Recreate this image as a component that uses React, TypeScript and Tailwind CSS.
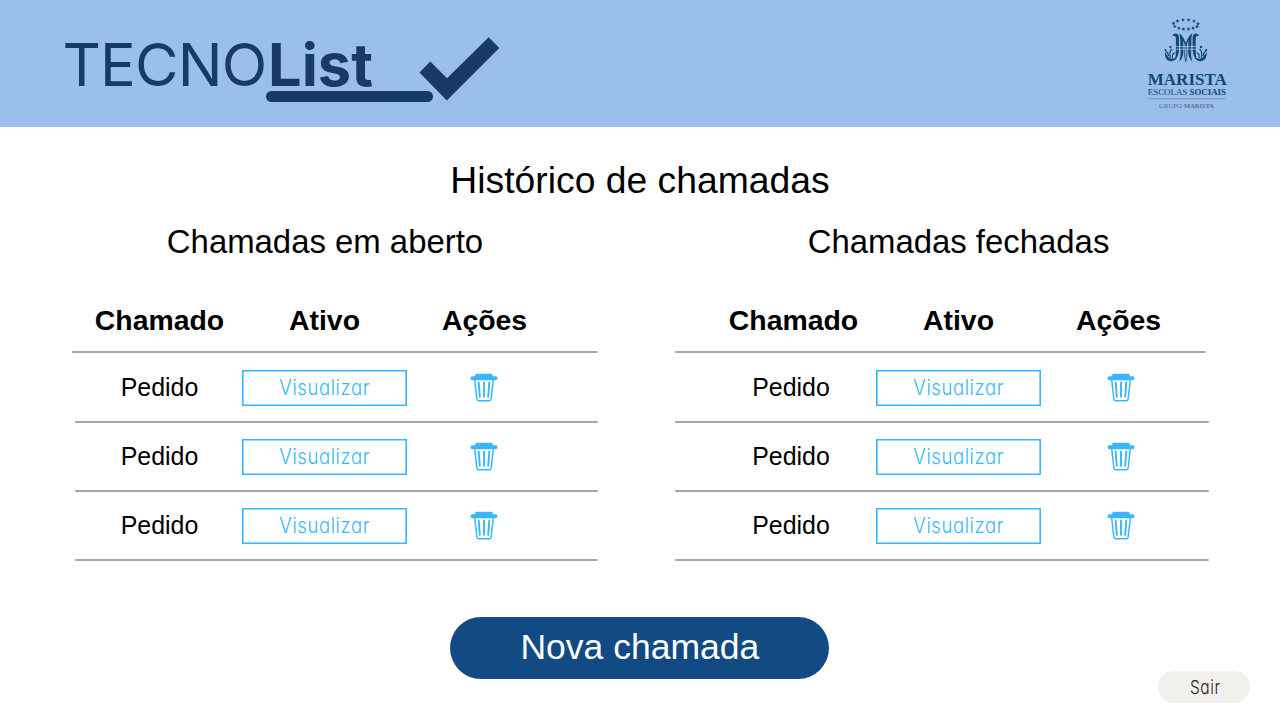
import React from "react";

const THIN = "font-['Inter',sans-serif] [font-feature-settings:'cv11']";

function CheckMark() {
  return (
    <svg className="absolute left-[354.5px] top-[37.3px]" width="82" height="66" viewBox="0 0 82 66" fill="#193a66">
      <path d="M.5 35.5 11.3 24.6 28 41.2 69.7 .2 80.3 11 27.8 63.5Z" />
    </svg>
  );
}

function BrandLogo() {
  return (
    <div className="relative ml-16 h-full w-[440px] font-['Inter',sans-serif] text-[59.5px] leading-[128.5px] text-[#193a66]">
      <div className="-ml-[1.5px] flex whitespace-nowrap">
        <span className="w-[205.6px] tracking-[-0.8px] font-normal">TECNO</span>
        <span className="font-bold">List</span>
      </div>
      <div className="absolute left-[202px] top-[91px] h-[10.5px] w-[166.5px] rounded-full bg-[#193a66]" />
      <CheckMark />
    </div>
  );
}

const STARS = [
  [1173.5, 23.2], [1177.5, 20.9], [1183, 19.8], [1188.5, 19.8], [1194, 21], [1198, 23.6],
  [1174.8, 26.3], [1178.8, 28], [1183.4, 28.9], [1188.5, 28.9], [1193, 28], [1197, 26.4],
];

function MaristaLogo() {
  return (
    <svg width="90" height="100" viewBox="1142 13 90 100" className="mr-[48px] mt-[13px]" fill="#124777">
      {STARS.map(([x, y], i) => (
        <path
          key={i}
          transform={`translate(${x} ${y})`}
          d="M0-1.9 .6-.6 1.9-.5 .9.5 1.200 1.800 0 1-1.200 1.800-.9.5-1.900-.5-.6-.6Z"
        />
      ))}
      <g id="half">
        <path d="M1172.300 36c.8-3.200 6.500-4 6.700 1.200v11c0 5-1 9-4.300 12 1-3.500 1.200-6 1.200-10V38.500c0-2.500-1.600-3.300-3.600-2.500Z" />
        <path d="M1179.300 33.200c2.300 1.500 3.800 4.800 3.900 8.800l.2 9c0 4.500-1.200 8-4.200 10.500 1.200-3.300 1.400-6 1.300-10l-.2-9c0-3.500-.2-6-1-9.300Z" />
        <path d="M1179.500 33.500c2.700 1.800 4.800 5.200 6.300 9.500v4.200c-1.800-5-4-9.500-6.300-13.700Z" />
        <path d="M1185.800 43c-1.600 5-1.600 14 0 18.500" fill="none" stroke="#124777" strokeWidth=".9" />
        <path d="M1165 51.500c-.8 5.500 2 9.800 6 9.800 3 0 5.200-1.600 6.300-5-2 2.200-4.700 3-6.800 2-2.600-1.300-4-3.600-5.500-6.800Z" />
        <path d="M1170.500 57.500c-1.300-3.500-.8-6.500 1.500-8.500M1168.500 56c-.2-3-1.300-4.500-3.300-6.200M1172.500 58c-.6-2.600.6-4.700 2.500-5.300" fill="none" stroke="#124777" strokeWidth="1.100" />
        <circle cx="1170.500" cy="47" r="1.200" />
        <circle cx="1165.400" cy="50" r="1" />
      </g>
      <use href="#half" transform="translate(2371.600 0) scale(-1 1)" />
      <path d="M1174.500 46.500h22.600M1174.500 49.300h22.600" stroke="#9abfeb" strokeWidth=".8" />
      <g fontFamily="'Liberation Serif', serif">
        <text x="1147.800" y="84.700" fontSize="15.800" fontWeight="700" textLength="79" lengthAdjust="spacingAndGlyphs">MARISTA</text>
        <text x="1147.800" y="95" fontSize="9.200" textLength="39.500" lengthAdjust="spacingAndGlyphs">ESCOLAS</text>
        <text x="1189.500" y="95" fontSize="9.200" fontWeight="700" textLength="36.500" lengthAdjust="spacingAndGlyphs">SOCIAIS</text>
        <g fill="#5f7083">
          <text x="1159" y="107.900" fontSize="7" textLength="23" lengthAdjust="spacingAndGlyphs">GRUPO</text>
          <text x="1184" y="107.900" fontSize="7" fontWeight="700" textLength="30" lengthAdjust="spacingAndGlyphs">MARISTA</text>
        </g>
      </g>
      <path d="M1148 98.700h77.500" stroke="#7796b9" strokeWidth=".9" />
    </svg>
  );
}

function TrashIcon() {
  return (
    <svg width="28" height="30" viewBox="0 0 28 30" fill="none" stroke="#38b6ff">
      <path d="M6.500 .8h15q1 0 1.200 1.400l.2 1.100h2.600a2 2 0 0 1 0 4H2.500a2 2 0 0 1 0-4h2.600l.2-1.100Q5.500 .8 6.500 .8Z" fill="#38b6ff" stroke="none" />
      <path d="M4.700 7l2.100 18.500q.3 2.200 2 2.200h10.400q1.700 0 2-2.200L23.300 7" strokeWidth="1.500" />
      <path d="M8.700 9.500l1.100 14.300M14 9.500v14.300M19.300 9.500l-1.100 14.300" strokeWidth="1.900" strokeLinecap="round" />
    </svg>
  );
}

type Side = "left" | "right";

function CallsTable({ side }: { side: Side }) {
  const left = side === "left";
  const line = "h-[2px] rounded-full bg-[#a6a6a6]";
  const pad = left ? "pl-[5px]" : "pl-[36px]";
  return (
    <div className={left ? "w-[525.5px]" : "w-[534px]"}>
      <div className={`flex h-[64px] items-center pt-[1.5px] text-[28.4px] font-bold ${pad}`}>
        <div className="w-[165px] text-center">Chamado</div>
        <div className="w-[165px] text-center">Ativo</div>
        <div className="w-[155px] text-center">Ações</div>
      </div>
      <div className={`${line} ${left ? "" : "mr-[3px]"}`} />
      {[0, 1, 2].map((i) => (
        <div key={i}>
          <div className={`flex items-center ${i === 0 ? "h-[68px] pt-[1px]" : "h-[67px]"} ${pad}`}>
            <div className={`w-[165px] pb-px text-center text-[24.900px] ${left ? "" : "pr-[5px]"}`}>Pedido</div>
            <button className={`ml-[0.3px] flex h-[35.5px] w-[165px] items-center justify-center pb-[2px] text-[21.5px] font-light text-[#38b6ff] shadow-[inset_0_0_0_1.6px_#38b6ff] ${THIN}`}>
              <span className="inline-block scale-x-[0.86] tracking-[0.7px]">Visualizar</span>
            </button>
            <div className={`flex w-[154px] justify-center ${left ? "" : "pl-[6px]"}`}>
              <TrashIcon />
            </div>
          </div>
          <div className={`${line} ${left ? "ml-[3px]" : ""}`} />
        </div>
      ))}
    </div>
  );
}

export default function App() {
  return (
    <div className="flex h-[720px] w-[1280px] flex-col overflow-hidden bg-white font-['Liberation_Sans',Arial,sans-serif] text-black">
      <header className="flex h-[126.6px] shrink-0 items-start justify-between bg-[#9abfeb]">
        <BrandLogo />
        <MaristaLogo />
      </header>
      <h1 className="mt-[31.4px] h-[44px] text-center text-[37.3px] leading-[44px]">Histórico de chamadas</h1>
      <div className="mt-[20px] flex h-[40px] text-[32.9px] leading-[40px]">
        <h2 className="w-[650px] text-center">Chamadas em aberto</h2>
        <h2 className="w-[617px] text-center">Chamadas fechadas</h2>
      </div>
      <main className="mt-[25.3px] flex gap-[77.5px] pl-[72px]">
        <CallsTable side="left" />
        <CallsTable side="right" />
      </main>
      <footer className="mt-[55.5px] flex justify-end pr-[29.7px]">
        <button className="mr-[329px] h-[62px] w-[379px] rounded-full bg-[#124a84] pl-[1px] text-[35.5px] text-white">Nova chamada</button>
        <button className={`mt-[54px] h-[32px] w-[92.500px] rounded-full bg-[#f1f0ec] pl-[3px] pt-[3px] text-[18.5px] font-light text-[#222] ${THIN}`}>
          <span className="inline-block scale-x-[0.84] tracking-[0.7px]">Sair</span>
        </button>
      </footer>
    </div>
  );
}
